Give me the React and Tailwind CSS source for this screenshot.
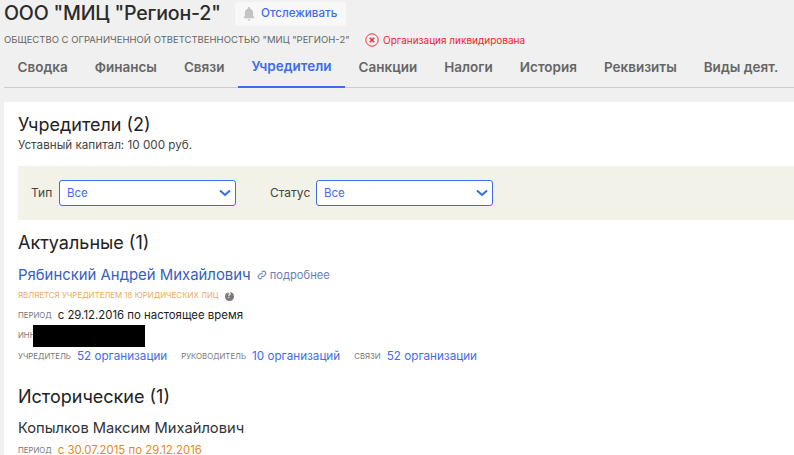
import React from "react";

const tabs = ["Сводка", "Финансы", "Связи", "Учредители", "Санкции", "Налоги", "История", "Реквизиты", "Виды деят."];

function Chevron() {
  return (
    <svg width="14" height="8" viewBox="0 0 14 8" fill="none" stroke="#2f6fe0" strokeWidth="2" className="shrink-0">
      <path d="M2 1.5 L7 6 L12 1.5" />
    </svg>
  );
}

function Select() {
  return (
    <div className="w-[177px] h-[26px] border border-[#3d6cf0] rounded-[3px] bg-white flex items-center justify-between pl-[7px] pr-[3px] text-[11.5px] text-[#3d6cf0]">
      <span className="pt-[2px]">Все</span>
      <Chevron />
    </div>
  );
}

function Label({ children, className = "" }) {
  return <span className={"text-[7.8px] uppercase text-[#777] " + className}>{children}</span>;
}

export default function App() {
  return (
    <div className="w-[794px] h-[455px] overflow-hidden bg-[#f0f0f0] font-['Inter','Noto_Sans',sans-serif] text-[#222]">
      <div className="h-[102px] pl-[4px]">
        <div className="flex items-center h-[27px]">
          <h1 className="text-[19.6px] leading-[27px] font-medium text-[#2b2b2b] tracking-[-0.2px] w-[217px]">ООО "МИЦ "Регион-2"</h1>
          <button className="ml-[14px] w-[111px] h-[24px] bg-[#f8f8f8] rounded-[3px] flex items-center pl-[7px] gap-[5px] text-[11.6px] font-medium text-[#3d6cf0]">
            <svg width="14" height="15" viewBox="0 0 24 24" fill="#c4c4c4"><path d="M12 1a2 2 0 0 0-2 2v1a7 7 0 0 0-5 7v5l-2 3v1h18v-1l-2-3v-5a7 7 0 0 0-5-7V3a2 2 0 0 0-2-2zM9.5 22a2.5 2.5 0 0 0 5 0z" /></svg>
            Отслеживать
          </button>
        </div>
        <div className="flex items-center h-[24px] pt-[2px]">
          <span className="text-[9.5px] text-[#666] w-[347px]">ОБЩЕСТВО С ОГРАНИЧЕННОЙ ОТВЕТСТВЕННОСТЬЮ "МИЦ "РЕГИОН-2"</span>
          <svg width="14" height="14" viewBox="0 0 14 14" fill="none" stroke="#f03040" className="ml-[14px]">
            <circle cx="7" cy="7" r="6.2" />
            <path d="M4.8 4.8 L9.2 9.2 M9.2 4.8 L4.8 9.2" strokeWidth="1.6" />
          </svg>
          <span className="ml-[4px] text-[10px] text-[#f5222d]">Организация ликвидирована</span>
        </div>
        <div className="h-[37px] border-b border-[#ccc] flex items-stretch">
          {tabs.map((t) => (
            <div
              key={t}
              className={
                "flex items-center whitespace-nowrap shrink-0 px-[13.5px] pb-[4px] text-[13.5px] font-semibold -mb-px " +
                (t === "Учредители" ? "text-[#3d6cf0] border-b-2 border-[#3d6cf0]" : "text-[#666]")
              }
            >
              {t}
            </div>
          ))}
        </div>
      </div>
      <div className="ml-[4px] h-[353px] bg-white pl-[14px] pt-[11px] overflow-hidden">
        <h2 className="text-[18px] leading-[24px] text-[#222]">Учредители (2)</h2>
        <p className="text-[11.7px] leading-[14px] text-[#444] mt-[1px]">Уставный капитал: 10 000 руб.</p>
        <div className="mt-[14px] h-[54px] bg-[#f2f2e8] flex items-center pl-[13px] text-[12px] text-[#444]">
          <span className="w-[28px]">Тип</span>
          <Select />
          <span className="ml-[34px] w-[46px]">Статус</span>
          <Select />
        </div>
        <h2 className="text-[18px] leading-[24px] mt-[11px] text-[#222]">Актуальные (1)</h2>
        <div className="mt-[11px] flex items-center h-[18px]">
          <span className="text-[14.9px] text-[#3560c0]">Рябинский Андрей Михайлович</span>
          <svg width="10" height="10" viewBox="0 0 24 24" fill="none" stroke="#6a7fb8" strokeWidth="2.6" className="ml-[6px]">
            <path d="M10 14a5 5 0 0 0 7 0l3-3a5 5 0 0 0-7-7l-1.5 1.5" />
            <path d="M14 10a5 5 0 0 0-7 0l-3 3a5 5 0 0 0 7 7l1.5-1.5" />
          </svg>
          <span className="ml-[3px] text-[11.2px] text-[#6a7fb8]">подробнее</span>
        </div>
        <div className="mt-[5px] flex items-center h-[14px]">
          <span className="text-[7.9px] uppercase text-[#e8ab66]">Является учредителем 18 юридических лиц</span>
          <span className="ml-[6px] w-[9px] h-[9px] rounded-full bg-[#777] text-white text-[7px] font-bold flex items-center justify-center">?</span>
        </div>
        <div className="mt-[6px] flex items-center h-[14px]">
          <Label>Период</Label>
          <span className="ml-[6px] text-[11.4px] text-[#222]">с 29.12.2016 по настоящее время</span>
        </div>
        <div className="mt-[2px] flex items-center h-[22px]">
          <Label className="w-[15px]">ИНН</Label>
          <div className="w-[112px] h-[22px] bg-black" />
        </div>
        <div className="mt-[2px] flex items-center h-[16px] text-[11.7px] text-[#3d6cf0]">
          <Label>Учредитель</Label>
          <span className="ml-[6px]">52 организации</span>
          <Label className="ml-[14px]">Руководитель</Label>
          <span className="ml-[6px]">10 организаций</span>
          <Label className="ml-[14px]">Связи</Label>
          <span className="ml-[6px]">52 организации</span>
        </div>
        <h2 className="text-[18px] leading-[24px] mt-[20px] text-[#222]">Исторические (1)</h2>
        <div className="mt-[10px] text-[14.7px] leading-[18px] text-[#333]">Копылков Максим Михайлович</div>
        <div className="mt-[7px] flex items-center h-[14px]">
          <Label>Период</Label>
          <span className="ml-[6px] text-[11.4px] text-[#e08a2c]">с 30.07.2015 по 29.12.2016</span>
        </div>
      </div>
    </div>
  );
}
